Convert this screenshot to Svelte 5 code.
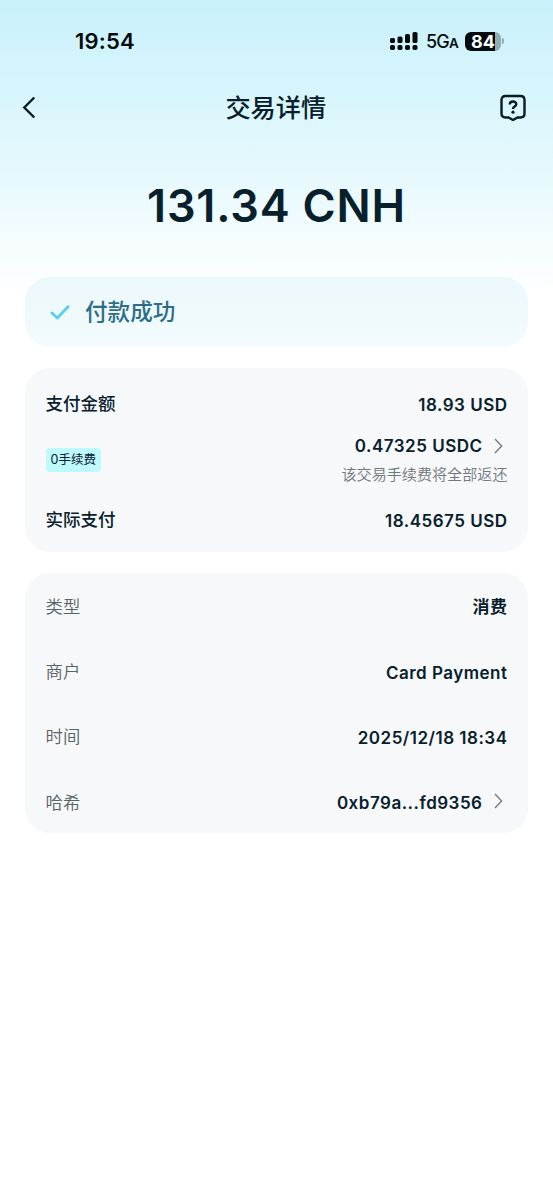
<script>
	// rows of the lower card
	const details = [
		{ label: '类型', value: '消费' },
		{ label: '商户', value: 'Card Payment' },
		{ label: '时间', value: '2025/12/18 18:34' },
		{ label: '哈希', value: '0xb79a...fd9356', link: true }
	];
	const signal = [5, 6.5, 9, 11];
</script>

{#snippet chevron()}
	<svg class="chevron" width="9" height="16" viewBox="0 0 9 16">
		<path d="M1 1L7.6 8L1 15" />
	</svg>
{/snippet}

<div class="page">
	<div class="status">
		<div class="clock">19:54</div>
		<div class="indicators">
			<svg class="signal" width="28" height="20" viewBox="0 0 28 20">
				{#each signal as h, i}
					<rect x={i * 7.5} y={12 - h} width="5" height={h} rx="1.6" />
					<rect x={i * 7.5} y="14" width="5" height="5" rx="1.7" />
				{/each}
			</svg>
			<div class="network">5G<small>A</small></div>
			<div class="battery"><span>84</span></div>
			<div class="tip"></div>
		</div>
	</div>

	<header>
		<svg width="14" height="24" viewBox="0 0 14 24">
			<path d="M12.3 2.5L2.3 12.5L12.3 22.5" />
		</svg>
		<h1>交易详情</h1>
		<svg width="28" height="28" viewBox="0 0 28 28">
			<path d="M6.5 3H21.500Q25.500 3 25.500 7V20.500Q25.500 24.500 21.500 24.500H18.500L14 27L9.500 24.500H6.500Q2.500 24.500 2.500 20.500V7Q2.500 3 6.500 3Z" />
			<path d="M10.700 11.600C10.700 7.600 17.300 7.600 17.300 11.300C17.300 13.600 14 13.600 14 16" />
			<circle cx="14" cy="19.200" r="1.600" />
		</svg>
	</header>

	<div class="amount">131.34 CNH</div>

	<div class="card success">
		<svg width="20" height="16" viewBox="0 0 20 16">
			<path d="M2 9L7.300 14L18 2.700" />
		</svg>
		<span>付款成功</span>
	</div>

	<div class="card payment">
		<div class="line">
			<div class="name">支付金额</div>
			<div class="value">18.93 USD</div>
		</div>
		<div class="line fee">
			<div class="tag">0手续费</div>
			<div class="refund">
				<div class="value">0.47325 USDC{@render chevron()}</div>
				<div class="note">该交易手续费将全部返还</div>
			</div>
		</div>
		<div class="line">
			<div class="name">实际支付</div>
			<div class="value">18.45675 USD</div>
		</div>
	</div>

	<div class="card details">
		{#each details as row}
			<div class="line">
				<div class="label">{row.label}</div>
				<div class="value">
					{row.value}{#if row.link}{@render chevron()}{/if}
				</div>
			</div>
		{/each}
	</div>
</div>

<style>
	:global(body) {
		margin: 0;
		background: #fff;
	}

	.page {
		box-sizing: border-box;
		height: 1200px;
		padding: 0 25px;
		overflow: hidden;
		background: linear-gradient(#c9f1fb 0px, #d7f5fc 90px, #e7f9fd 180px, #fff 292px);
		font-family: Inter, 'Noto Sans CJK SC', sans-serif;
		color: #07202b;
	}

	svg {
		flex: none;
		fill: none;
		stroke: #071c25;
		stroke-width: 2.4;
	}

	.status {
		display: flex;
		justify-content: space-between;
		height: 82px;
		padding: 0 24px 0 50px;
		color: #050b0d;
	}

	.clock {
		line-height: 83px;
		font-size: 22px;
		font-weight: 600;
		letter-spacing: 0.2px;
	}

	.indicators {
		display: flex;
		align-items: center;
	}

	.signal {
		margin-right: 8px;
		fill: #050b0d;
		stroke: none;
	}

	.network {
		width: 39px;
		padding-top: 2px;
		font-size: 18px;
		font-weight: 500;
		line-height: 80px;
		white-space: nowrap;
		letter-spacing: -0.8px;
	}

	.network small {
		font-size: 13.5px;
		font-weight: 600;
	}

	.battery {
		width: 36px;
		height: 19px;
		border-radius: 6px;
		background: linear-gradient(90deg, #050b0d 84%, #91adb4 84%);
		color: #fff;
		font-size: 18px;
		font-weight: 700;
		line-height: 19px;
		text-align: center;
	}

	.tip {
		width: 2px;
		height: 6px;
		margin-left: 1px;
		border-radius: 0 2px 2px 0;
		background: #91adb4;
	}

	header {
		display: flex;
		align-items: center;
		justify-content: space-between;
		height: 50px;
		margin: 0 1.5px 0 -3px;
	}

	header circle {
		fill: #071c25;
		stroke: none;
	}

	h1 {
		margin: 2px 0 0 17px;
		font-size: 25.2px;
		font-weight: 500;
		line-height: 50px;
	}

	.amount {
		height: 145px;
		font-size: 45px;
		font-weight: 600;
		line-height: 148px;
		letter-spacing: 0.8px;
		text-align: center;
		white-space: nowrap;
	}

	.card {
		box-sizing: border-box;
		border-radius: 25px;
		padding: 0 20.5px;
		background: #f6f8fa;
	}

	.success {
		display: flex;
		align-items: center;
		height: 70px;
		padding-left: 25px;
		background: linear-gradient(#ebf8fb, #f3fbfd);
		color: #2a6e89;
		font-size: 22.6px;
		font-weight: 500;
	}

	.success span {
		padding-bottom: 4px;
	}

	.success svg {
		margin-right: 15px;
		stroke: #5ccfea;
		stroke-width: 3;
		stroke-linecap: round;
		stroke-linejoin: round;
	}

	.payment {
		height: 184px;
		margin-top: 21px;
		padding-top: 20px;
	}

	.line {
		display: flex;
		align-items: center;
		justify-content: space-between;
		height: 33px;
	}

	.name {
		padding-bottom: 4px;
		font-size: 17.5px;
		font-weight: 500;
	}

	.value {
		display: flex;
		align-items: center;
		font-size: 17px;
		font-weight: 600;
		line-height: 24px;
		letter-spacing: 0.5px;
	}

	.fee {
		height: 83px;
	}

	.refund {
		display: flex;
		flex-direction: column;
		align-items: flex-end;
		padding-bottom: 4px;
	}

	.tag {
		height: 24px;
		margin-bottom: 5px;
		padding: 0 5px;
		border-radius: 4px;
		background: #bef9fd;
		font-size: 12.5px;
		line-height: 24px;
	}

	.note {
		margin-top: 5px;
		color: #71797e;
		font-size: 15.1px;
		font-weight: 350;
		line-height: 24px;
	}

	.chevron {
		margin: 0 5px 0 11px;
		stroke: #788187;
		stroke-width: 1.5;
	}

	.details {
		height: 260.5px;
		margin-top: 20.5px;
		padding-top: 1px;
	}

	.details .line {
		height: 65.4px;
	}

	.details .value {
		padding-top: 2px;
	}

	.details .chevron {
		margin-bottom: 4px;
	}

	.label {
		padding-bottom: 2px;
		color: #596266;
		font-size: 17.4px;
		font-weight: 350;
	}
</style>
